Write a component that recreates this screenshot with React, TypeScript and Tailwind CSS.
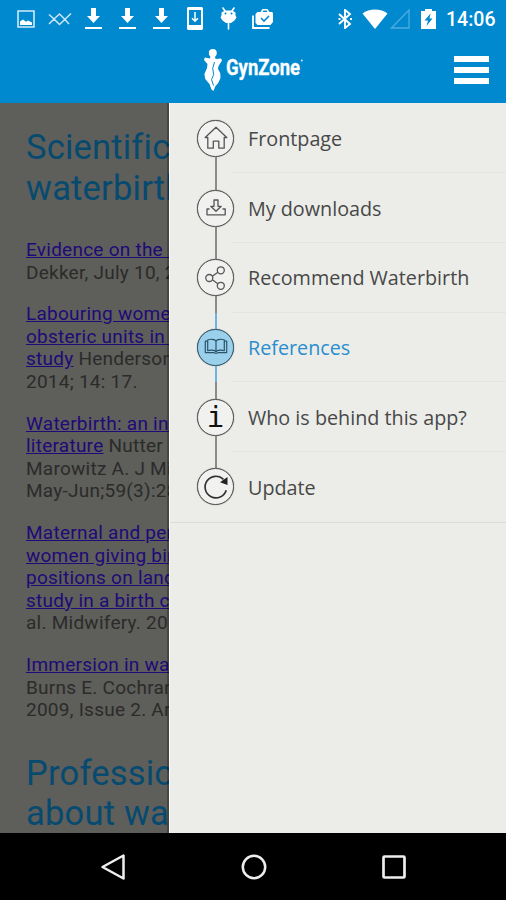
import React from 'react';
import clsx from 'clsx';

interface MenuItem {
  id: string;
  label: string;
  icon: React.ReactNode;
  active?: boolean;
}

interface Reference {
  link: string[];
  // text that follows the link, the first entry stays on the link's last line
  rest: string[];
  breakAfterLink?: boolean;
}

const HomeIcon = () => (
  <svg viewBox="0 0 26 26" className="h-[26px] w-[26px]" fill="none" stroke="#555" strokeWidth="1.3" strokeLinejoin="round">
    <path d="M4.8 12.5H2.2L13 2.2l4.5 4.3 2 2 4.3 4h-2.6v10.7h-5.4v-7h-5.5v7H4.8z" />
  </svg>
);

const DownloadIcon = () => (
  <svg viewBox="0 0 26 26" className="h-[26px] w-[26px]" fill="none" stroke="#555" strokeWidth="1.3" strokeLinejoin="round">
    <path d="M11 5h4v6.3h3.2L13 16.3l-5.2-5H11z" />
    <path d="M6.5 14H4v5.8h18.2V14h-2.7" />
  </svg>
);

const ShareIcon = () => (
  <svg viewBox="0 0 26 26" className="h-[26px] w-[26px]" fill="none" stroke="#555" strokeWidth="1.3">
    <circle cx="6.3" cy="13" r="3.5" />
    <circle cx="17.8" cy="5.3" r="3.5" />
    <circle cx="17.8" cy="20.8" r="3.5" />
    <path d="M9.3 11.2l5.6-3.9M9.3 14.8l5.6 4" />
  </svg>
);

const BookIcon = () => (
  <svg viewBox="0 0 26 26" className="h-[26px] w-[26px]" fill="none" stroke="#2b5468" strokeWidth="1.2" strokeLinejoin="round">
    <path d="M13 6.8C11.5 5.1 7 4.8 4.7 6v10.7c2.8-1 6.8-.7 8.3.8 1.5-1.5 5.5-1.8 8.3-.8V6C19 4.8 14.5 5.1 13 6.8z" />
    <path d="M13 6.8v10.7M4.7 7.2H2.3v11.4H11c.8 0 1 .7 2 .7s1.2-.7 2-.7h8.7V7.2h-2.4" />
  </svg>
);

const UpdateIcon = () => (
  <svg viewBox="0 0 26 26" className="h-[26px] w-[26px]" fill="none" stroke="#333" strokeWidth="1.7">
    <path d="M23.200 16.200A10.800 10.800 0 1 1 20.500 5.400" />
    <path d="M24.500 3v8l-7.500-2.800z" fill="#222" stroke="none" />
  </svg>
);

const menuItems: MenuItem[] = [
  { id: 'frontpage', label: 'Frontpage', icon: <HomeIcon /> },
  { id: 'downloads', label: 'My downloads', icon: <DownloadIcon /> },
  { id: 'recommend', label: 'Recommend Waterbirth', icon: <ShareIcon /> },
  { id: 'references', label: 'References', icon: <BookIcon />, active: true },
  {
    id: 'about',
    label: 'Who is behind this app?',
    icon: <span className="font-['DejaVu_Sans_Mono',monospace] text-[29px] leading-none text-[#111]">i</span>,
  },
  { id: 'update', label: 'Update', icon: <UpdateIcon /> },
];

const references: Reference[] = [
  { link: ['Evidence on the safety'], rest: ['Dekker, July 10, 2014'], breakAfterLink: true },
  { link: ['Labouring women who', 'obsteric units in the', 'study'], rest: [' Henderson J', '2014; 14: 17.'] },
  { link: ['Waterbirth: an integrative', 'literature'], rest: [' Nutter E', 'Marowitz A. J Midwifery', 'May-Jun;59(3):286'] },
  {
    link: ['Maternal and perinatal', 'women giving birth', 'positions on land', 'study in a birth centre'],
    rest: ['al. Midwifery. 2014'],
    breakAfterLink: true,
  },
  { link: ['Immersion in water'], rest: ['Burns E. Cochrane', '2009, Issue 2. Art'], breakAfterLink: true },
];

const renderLines = (lines: string[]) =>
  lines.map((line, i) => (
    <React.Fragment key={line}>
      {i > 0 && <br />}
      {line}
    </React.Fragment>
  ));

const DownloadDone = () => (
  <svg viewBox="0 0 17 22" className="h-[22px] w-[17px]" fill="#fff">
    <path d="M6 0h5v8h4l-6.500 7L2 8h4zM0 19h17v2H0z" />
  </svg>
);

const StatusBar = () => (
  <div className="flex h-[37px] items-center pl-[17px] pr-[10px]">
    <div className="flex flex-1 items-center">
      <svg viewBox="0 0 18 18" className="h-[18px] w-[18px]" fill="none">
        <path d="M1 1h16v16H1z" stroke="#d3eaf7" strokeWidth="1.600" />
        <path d="M3 15v-3.500l3-2 3 2.300 2-1.300 4 2V15z" fill="#fff" />
      </svg>
      <svg viewBox="0 0 24 14" className="ml-[13px] h-[14px] w-[24px]" fill="none" stroke="#cde7f6" strokeWidth="1.500">
        <path d="M1 2.500l4 3.500 6.500 6.500L23 1.500M1 12l5-5 5.500-5 4.500 4.500 5 5.500" />
      </svg>
      <div className="ml-[13px] flex gap-[17px]">
        <DownloadDone />
        <DownloadDone />
        <DownloadDone />
      </div>
      <svg viewBox="0 0 16 23" className="ml-[17px] h-[23px] w-[16px]" fill="none">
        <path fill="#fff" fillRule="evenodd" d="M1 0h14l1 1v21l-1 1H1l-1-1V1zM2 3v15h12V3z" />
        <path d="M8 5v9M5 11.300l3 3 3-3" stroke="#fff" strokeWidth="1.500" />
      </svg>
      <svg viewBox="0 0 17 23" className="ml-[17px] h-[23px] w-[17px]">
        <path d="M3 1l2 3M14 1l-2 3M8.500 14v8" stroke="#fff" strokeWidth="1.600" strokeLinecap="round" />
        <path d="M1.500 5.500l3.500-2h7l3.500 2v3l1 2-2 3-3.500 2.500H6l-3.500-2.500-2-3 1-2z" fill="#fff" />
        <circle cx="5.500" cy="6.500" r="1" fill="#0089cf" />
        <circle cx="11.500" cy="6.500" r="1" fill="#0089cf" />
      </svg>
      <svg viewBox="0 0 22 20" className="ml-[15px] h-[20px] w-[22px]" fill="none">
        <path d="M1 6.500V19h16.500" stroke="#fff" strokeWidth="1.800" />
        <path d="M5.500 3h3l2-3h5l2 3h2.500l1 1v9l-2.500 3H5.500l-2-2V5z" fill="#fff" />
        <path d="M10.500 3l1-1.500h3l1 1.500z" fill="#0089cf" />
        <path d="M9 9l3 3 5-5" stroke="#0089cf" strokeWidth="1.600" />
      </svg>
    </div>
    <svg viewBox="0 0 14 20" className="h-[20px] w-[14px]" fill="none" stroke="#fff" strokeWidth="1.900">
      <path d="M1 5l11 10-5 4V1l5 4L1 15" />
      <path d="M1.500 9v2M13 9v2" />
    </svg>
    <svg viewBox="0 0 26 20" className="ml-[10px] h-[20px] w-[26px]" fill="#fff">
      <path d="M.500 4.500C7-1 19-1 25.500 4.500L13 20z" />
    </svg>
    <svg viewBox="0 0 20 20" className="ml-[2px] h-[20px] w-[20px]" fill="none" stroke="#4dacde" strokeWidth="1.300">
      <path d="M1.500 19H19V1z" />
    </svg>
    <svg viewBox="0 0 15 20" className="ml-[11px] h-[20px] w-[15px]">
      <path d="M4 0h7v2h4v18H0V2h4z" fill="#fff" />
      <path d="M9.500 4.500L3.500 11.500H7l-1.500 5.500 6-7.500H8.500z" fill="#0089cf" />
    </svg>
    <span className="ml-[10px] mt-[2px] w-[50px] whitespace-nowrap text-[19.500px] font-medium leading-none text-white">14:06</span>
  </div>
);

const Header = () => (
  <header className="h-[103px] bg-[#0089cf]">
    <StatusBar />
    <div className="flex h-[66px] items-center pl-[203px] pr-[17px]">
      <svg viewBox="0 0 106 44" className="h-[44px] w-[106px]" fill="#fff">
        <circle cx="9.800" cy="5" r="4" />
        <path d="M7.500 8h4.500l.500 3 5.500-.500 1 2-3.500 5.500-.500 3 2.200 4 .300 5-2.300 5-3 3.500-1.700 4.500-2-1.500-2-5.500-4.300-5-.800-5L4 20l.500-4L1 12l.800-2.500L7 10.500z" />
        <path d="M11.500 14l-1.800 6.500 1 6-2.200 5 2 6" fill="none" stroke="#0089cf" strokeWidth="1" />
        <text
          x="23"
          y="27"
          textLength="74"
          lengthAdjust="spacingAndGlyphs"
          stroke="#fff"
          strokeWidth=".3"
          className="font-['Roboto',sans-serif] text-[21.500px] font-bold"
        >
          GynZone
        </text>
        <circle cx="98.800" cy="12.500" r="1" opacity=".8" />
      </svg>
      <button aria-label="Menu" className="mb-[1px] ml-auto flex w-[35px] flex-col gap-[5px]">
        <span className="h-[6px] bg-white" />
        <span className="h-[6px] bg-white" />
        <span className="h-[6px] bg-white" />
      </button>
    </div>
  </header>
);

const Article = () => (
  <main className="relative w-[169px] shrink-0 overflow-hidden bg-[#5e5e5b] pl-[26px] pt-[24px]">
    <div className="w-[420px]">
      <h1 className="whitespace-nowrap text-[34.500px] leading-[40.500px] tracking-[0.2px] text-[#064a70]">
        Scientific articles
        <br />
        waterbirth
      </h1>
      <div className="mt-[31px] space-y-[19px] text-[19px] leading-[22.600px] tracking-[0.25px] text-[#2b2b2a]">
        {references.map((ref) => (
          <p key={ref.link[0]} className="whitespace-nowrap">
            <a className="text-[#1e0a78] underline">{renderLines(ref.link)}</a>
            {ref.breakAfterLink && <br />}
            {renderLines(ref.rest)}
          </p>
        ))}
      </div>
      <h1 className="mt-[31px] whitespace-nowrap text-[34.500px] leading-[40.500px] tracking-[0.2px] text-[#064a70]">
        Professional
        <br />
        about waterbirth
      </h1>
    </div>
    {/* drawer shadow */}
    <div className="absolute inset-y-0 right-0 w-[2px] bg-black/25" />
  </main>
);

const Drawer = () => (
  <nav className="flex-1 border-l border-white bg-[#ecede8]">
    <ul className="border-b border-[#dcddd9] pt-[0.500px]">
      {menuItems.map((item, index) => (
        <li key={item.id} className="flex h-[69.700px] pl-[27px]">
          <div className="flex w-[37px] flex-col items-center">
            <span className={clsx('w-[2px] flex-1', index > 0 && (item.active ? 'bg-[#6db3e0]' : 'bg-[#8a8a88]'))} />
            <span
              className={clsx(
                'flex h-[37px] w-[37px] items-center justify-center rounded-full border-[1.500px] shadow-[0_0_1px_#555]',
                item.active ? 'border-[#315a6d] bg-[#9bd0ec]' : 'border-[#555] bg-[#f1f1f0]'
              )}
            >
              {item.icon}
            </span>
            <span
              className={clsx(
                'w-[2px] flex-1',
                index < menuItems.length - 1 && (item.active ? 'bg-[#6db3e0]' : 'bg-[#8a8a88]')
              )}
            />
          </div>
          <div
            className={clsx(
              "ml-[-2px] flex flex-1 items-center whitespace-nowrap pl-[16px] pt-[1px] font-['Open_Sans',sans-serif] text-[19.750px] leading-[27px]",
              index < menuItems.length - 1 && 'border-b border-[#e4e5e0]',
              item.active ? 'text-[#2a8dcf]' : 'text-[#484848]'
            )}
          >
            {item.label}
          </div>
        </li>
      ))}
    </ul>
  </nav>
);

const NavigationBar = () => (
  <footer className="flex h-[67px] items-center justify-between bg-black pl-[100px] pr-[98px]">
    <svg viewBox="0 0 28 30" className="h-[30px] w-[28px]" fill="none" stroke="#eee" strokeWidth="2.500" strokeLinejoin="round">
      <path d="M23.500 3.500v23L2.500 15z" />
    </svg>
    <svg viewBox="0 0 28 28" className="h-[28px] w-[28px]" fill="none" stroke="#eee" strokeWidth="2.500">
      <circle cx="14" cy="14" r="11.200" />
    </svg>
    <svg viewBox="0 0 28 28" className="h-[28px] w-[28px]" fill="none" stroke="#eee" strokeWidth="2.700">
      <rect x="3.500" y="3.500" width="21" height="21" rx="1" />
    </svg>
  </footer>
);

const App: React.FC = () => {
  return (
    <div className="flex h-[900px] w-[506px] flex-col overflow-hidden font-['Roboto',sans-serif]">
      <Header />
      <div className="flex h-[730px] overflow-hidden">
        <Article />
        <Drawer />
      </div>
      <NavigationBar />
    </div>
  );
};

export default App;
